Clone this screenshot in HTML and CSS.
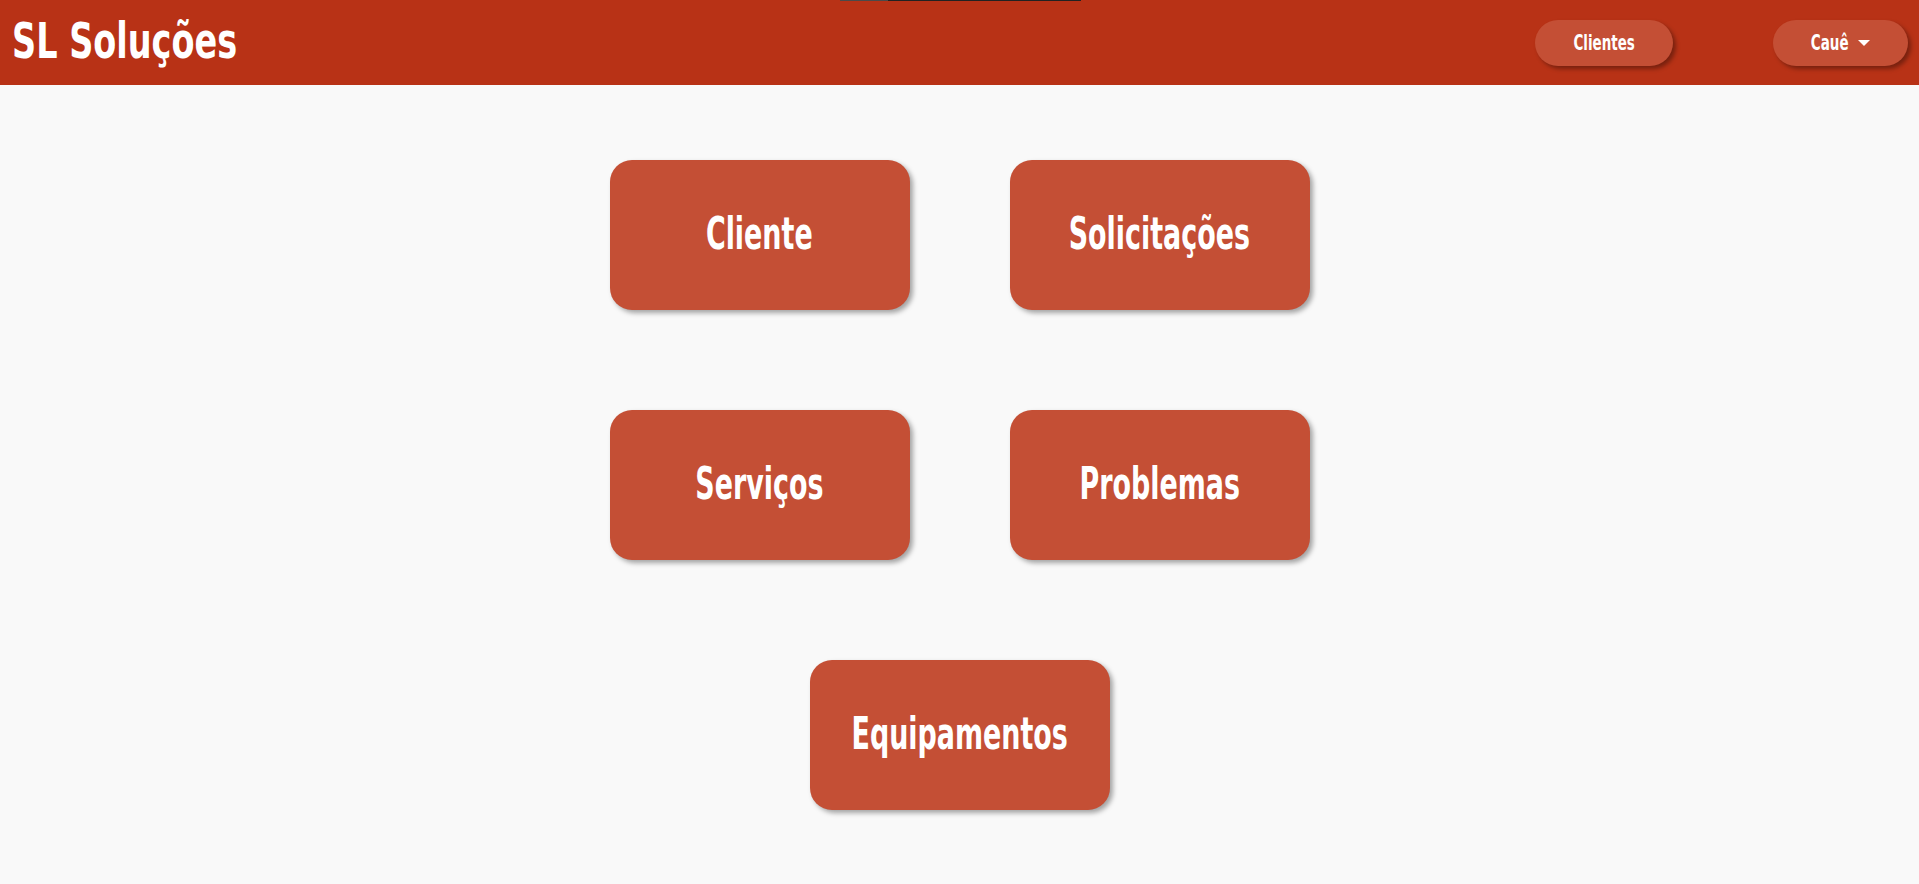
FILE: index.html
```html
<!DOCTYPE html>
<html lang="pt-BR">
<head>
<meta charset="utf-8">
<title>SL Soluções</title>
<link rel="stylesheet" href="styles.css">
</head>
<body>
<div class="topline"><span class="topline-head"></span></div>
<header class="navbar">
  <a class="brand" href="#"><span class="squeeze">SL Soluções</span></a>
  <nav class="nav">
    <a class="pill" href="#"><span class="squeeze">Clientes</span></a>
    <a class="pill pill-user" href="#"><span class="squeeze user-name">Cauê</span><span class="caret"></span></a>
  </nav>
</header>
<main class="menu">
  <a class="tile" href="#"><span class="squeeze">Cliente</span></a>
  <a class="tile" href="#"><span class="squeeze">Solicitações</span></a>
  <a class="tile" href="#"><span class="squeeze">Serviços</span></a>
  <a class="tile" href="#"><span class="squeeze">Problemas</span></a>
  <a class="tile tile-wide" href="#"><span class="squeeze">Equipamentos</span></a>
</main>
</body>
</html>
```
FILE: styles.css
```css
* { box-sizing: border-box; }
html, body { margin: 0; padding: 0; }
body {
  background: #f9f9f9;
  font-family: "DejaVu Sans Condensed", "Liberation Sans", sans-serif;
  font-weight: bold;
  color: #fff;
  height: 884px;
  overflow: hidden;
  position: relative;
}
a { color: #fff; text-decoration: none; }
.squeeze { display: inline-block; transform: scaleX(0.665); white-space: nowrap; }

.topline {
  position: absolute;
  top: 0;
  left: 840px;
  width: 241px;
  height: 1px;
  background: #222;
  z-index: 5;
}
.topline-head { display: block; width: 48px; height: 1px; background: #4a4a4a; }

.navbar {
  height: 85px;
  background: #b83216;
  display: flex;
  align-items: center;
  justify-content: space-between;
  padding: 0 11px 0 12px;
}
.brand {
  font-size: 49px;
  line-height: 1;
  margin-top: -2px;
}
.brand .squeeze { transform: scaleX(0.76); transform-origin: left center; }
.nav { display: flex; gap: 100px; align-items: center; }
.pill {
  height: 46px;
  border-radius: 23px;
  background: #c44f35;
  box-shadow: 3px 3px 4px rgba(0, 0, 0, 0.35);
  display: flex;
  align-items: center;
  justify-content: center;
  font-size: 22px;
  width: 138px;
}
.pill .squeeze { transform: scaleX(0.68); }
.pill-user { width: 135px; gap: 9px; padding-left: 0; }
.user-name { margin: 0 -9px; }
.caret {
  width: 0;
  height: 0;
  border-top: 6px solid #fff;
  border-left: 6px solid transparent;
  border-right: 6px solid transparent;
  margin-top: 1px;
}

.menu {
  display: grid;
  grid-template-columns: 300px 300px;
  column-gap: 100px;
  row-gap: 100px;
  justify-content: center;
  padding-top: 75px;
}
.tile {
  height: 150px;
  border-radius: 22px;
  background: #c44f35;
  box-shadow: 3px 3px 5px rgba(0, 0, 0, 0.35);
  display: flex;
  align-items: center;
  justify-content: center;
  font-size: 45px;
  padding-bottom: 4px;
}
.tile-wide { grid-column: 1 / span 2; justify-self: center; width: 300px; }
```
